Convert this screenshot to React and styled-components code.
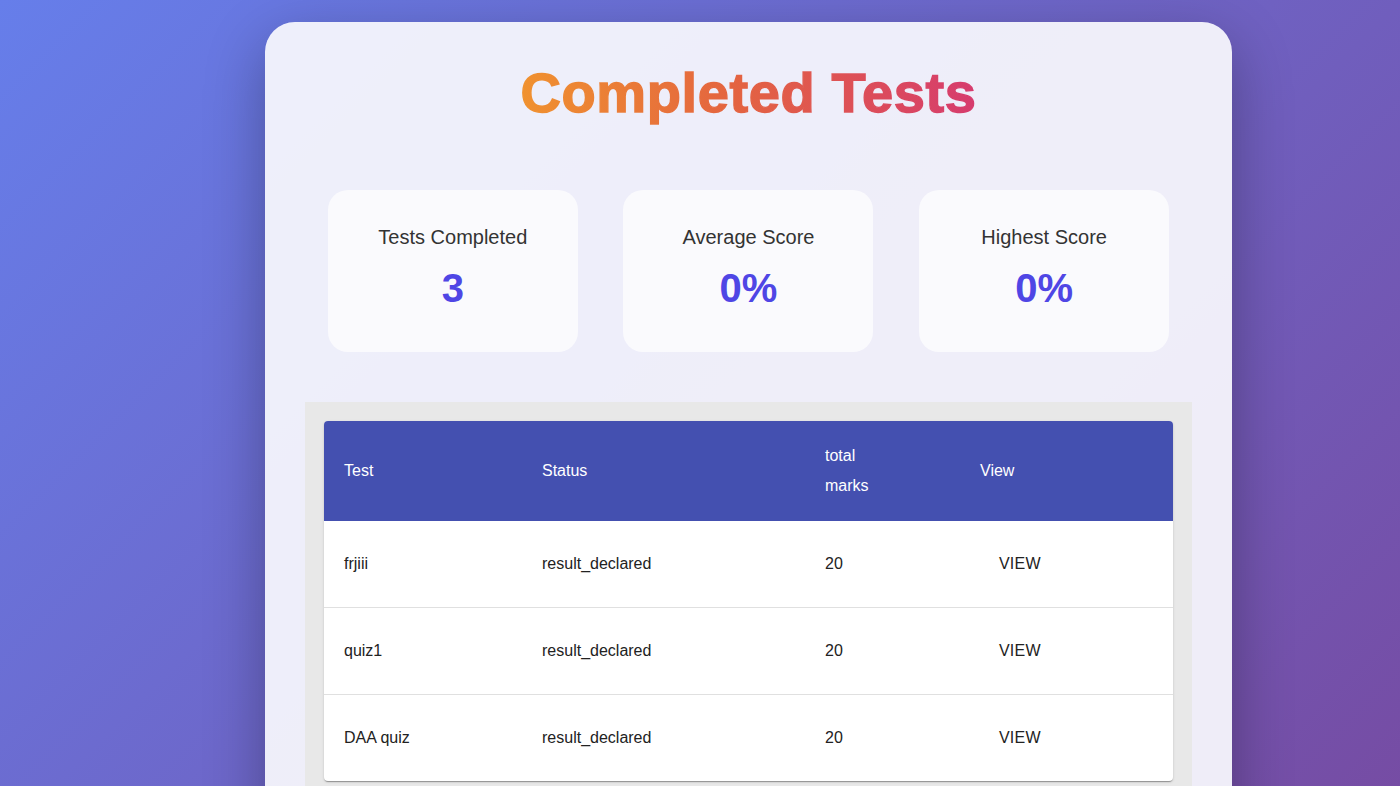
import React from "react";
import styled, { createGlobalStyle } from "styled-components";

const Global = createGlobalStyle`
  html, body { margin: 0; padding: 0; }
  body {
    font-family: "Liberation Sans", Arial, sans-serif;
    background: linear-gradient(135deg, #667eea 0%, #764ba2 100%);
    min-height: 786px;
    overflow: hidden;
  }
`;

const Page = styled.div`
  min-height: 786px;
  display: flex;
  justify-content: center;
  padding: 22px 0 0 97px;
  box-sizing: border-box;
`;

const Card = styled.div`
  width: 967px;
  background: rgba(245, 245, 252, 0.95);
  border-radius: 30px 30px 0 0;
  box-shadow: 0 20px 60px rgba(0, 0, 0, 0.3);
  padding: 40px 40px 0;
  box-sizing: border-box;
  min-height: 800px;
`;

const TitleWrap = styled.div`
  display: flex;
  justify-content: center;
`;

const Title = styled.h1`
  margin: 0;
  font-family: "Liberation Sans", Arial, sans-serif;
  font-weight: 700;
  font-size: 56px;
  letter-spacing: 0.6px;
  line-height: 62px;
  padding-bottom: 2px;
  background: linear-gradient(90deg, #f0922f 0%, #e4653f 45%, #d63b6e 100%);
  -webkit-background-clip: text;
  background-clip: text;
  color: transparent;
  -webkit-text-stroke: 1.4px transparent;
`;

const Stats = styled.div`
  display: flex;
  justify-content: space-around;
  margin-top: 64px;
`;

const StatCard = styled.div`
  width: 250px;
  height: 162px;
  border-radius: 20px;
  background: #fafafd;
  display: flex;
  flex-direction: column;
  align-items: center;
  box-sizing: border-box;
  padding-top: 35px;
`;

const StatLabel = styled.div`
  font-size: 20px;
  color: #333;
  line-height: 24px;
`;

const StatValue = styled.div`
  margin-top: 15px;
  font-size: 40px;
  font-weight: 700;
  color: #4f46e5;
  line-height: 48px;
`;

const TableArea = styled.div`
  margin-top: 50px;
  background: #e8e8e8;
  padding: 19px;
  min-height: 400px;
`;

const Paper = styled.div`
  background: #fff;
  border-radius: 4px;
  overflow: hidden;
  box-shadow: 0 2px 1px -1px rgba(0,0,0,0.2), 0 1px 1px 0 rgba(0,0,0,0.14), 0 1px 3px 0 rgba(0,0,0,0.12);
`;

const Table = styled.table`
  width: 100%;
  border-collapse: collapse;
  table-layout: fixed;
`;

const Th = styled.th`
  background: #4450b0;
  color: #fff;
  font-weight: 400;
  font-size: 16px;
  line-height: 30px;
  text-align: left;
  padding: 20px 20px;
  height: 100px;
  box-sizing: border-box;
  width: ${(p) => p.$w}px;
`;

const HeadLabel = styled.span`
  display: inline-block;
  max-width: ${(p) => (p.$narrow ? "60px" : "none")};
`;

const Td = styled.td`
  font-size: 16px;
  color: #222;
  padding: 0 20px;
  height: 86px;
  border-bottom: 1px solid #e0e0e0;
  line-height: 24px;
  tr:last-child > & { border-bottom: none; }
`;

const ViewButton = styled.button`
  background: none;
  border: none;
  font-family: "Liberation Sans", Arial, sans-serif;
  font-size: 16px;
  color: #222;
  padding: 6px 0 6px 19px;
  cursor: pointer;
  letter-spacing: 0.2px;
`;

const stats = [
  { label: "Tests Completed", value: "3" },
  { label: "Average Score", value: "0%" },
  { label: "Highest Score", value: "0%" },
];

const rows = [
  { name: "frjiii", status: "result_declared", marks: 20 },
  { name: "quiz1", status: "result_declared", marks: 20 },
  { name: "DAA quiz", status: "result_declared", marks: 20 },
];

export default function App() {
  return (
    <>
      <Global />
      <Page>
        <Card>
          <TitleWrap>
            <Title>Completed Tests</Title>
          </TitleWrap>
          <Stats>
            {stats.map((s) => (
              <StatCard key={s.label}>
                <StatLabel>{s.label}</StatLabel>
                <StatValue>{s.value}</StatValue>
              </StatCard>
            ))}
          </Stats>
          <TableArea>
            <Paper>
              <Table>
                <thead>
                  <tr>
                    <Th $w={198}><HeadLabel>Test</HeadLabel></Th>
                    <Th $w={283}><HeadLabel>Status</HeadLabel></Th>
                    <Th $w={155}><HeadLabel $narrow>total marks</HeadLabel></Th>
                    <Th $w={213}><HeadLabel>View</HeadLabel></Th>
                  </tr>
                </thead>
                <tbody>
                  {rows.map((r) => (
                    <tr key={r.name}>
                      <Td>{r.name}</Td>
                      <Td>{r.status}</Td>
                      <Td>{r.marks}</Td>
                      <Td>
                        <ViewButton>VIEW</ViewButton>
                      </Td>
                    </tr>
                  ))}
                </tbody>
              </Table>
            </Paper>
          </TableArea>
        </Card>
      </Page>
    </>
  );
}
